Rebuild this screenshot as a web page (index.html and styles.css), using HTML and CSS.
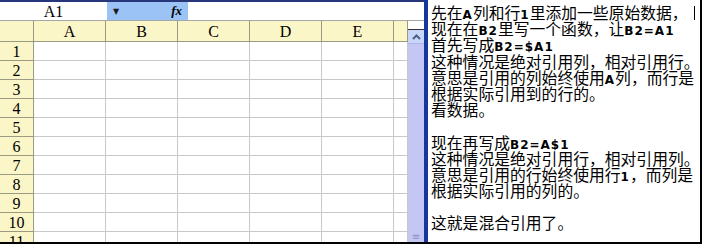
FILE: index.html
```html
<!DOCTYPE html>
<html lang="zh-CN">

<head>
    <meta charset="UTF-8">
    <title>混合引用</title>
    <link rel="stylesheet" href="styles.css">
</head>

<body>
    <div class="app">
        <div class="sheet">
            <div class="formula-bar">
                <div class="name-box">A1</div>
                <div class="fx-box">
                    <span class="drop">&#9660;</span>
                    <span class="fx">fx</span>
                </div>
                <div class="formula-input"></div>
            </div>

            <div class="sheet-body">
                <div class="grid">
                    <div class="corner"></div>
                    <div class="col-head">A</div>
                    <div class="col-head">B</div>
                    <div class="col-head">C</div>
                    <div class="col-head">D</div>
                    <div class="col-head">E</div>
                    <div class="col-head"></div>

                    <div class="row-head">1</div><div class="cell"></div><div class="cell"></div><div class="cell"></div><div class="cell"></div><div class="cell"></div><div class="cell"></div>
                    <div class="row-head">2</div><div class="cell"></div><div class="cell"></div><div class="cell"></div><div class="cell"></div><div class="cell"></div><div class="cell"></div>
                    <div class="row-head">3</div><div class="cell"></div><div class="cell"></div><div class="cell"></div><div class="cell"></div><div class="cell"></div><div class="cell"></div>
                    <div class="row-head">4</div><div class="cell"></div><div class="cell"></div><div class="cell"></div><div class="cell"></div><div class="cell"></div><div class="cell"></div>
                    <div class="row-head">5</div><div class="cell"></div><div class="cell"></div><div class="cell"></div><div class="cell"></div><div class="cell"></div><div class="cell"></div>
                    <div class="row-head">6</div><div class="cell"></div><div class="cell"></div><div class="cell"></div><div class="cell"></div><div class="cell"></div><div class="cell"></div>
                    <div class="row-head">7</div><div class="cell"></div><div class="cell"></div><div class="cell"></div><div class="cell"></div><div class="cell"></div><div class="cell"></div>
                    <div class="row-head">8</div><div class="cell"></div><div class="cell"></div><div class="cell"></div><div class="cell"></div><div class="cell"></div><div class="cell"></div>
                    <div class="row-head">9</div><div class="cell"></div><div class="cell"></div><div class="cell"></div><div class="cell"></div><div class="cell"></div><div class="cell"></div>
                    <div class="row-head">10</div><div class="cell"></div><div class="cell"></div><div class="cell"></div><div class="cell"></div><div class="cell"></div><div class="cell"></div>
                    <div class="row-head">11</div><div class="cell"></div><div class="cell"></div><div class="cell"></div><div class="cell"></div><div class="cell"></div><div class="cell"></div>
                </div>

                <div class="vscroll">
                    <div class="scroll-top"></div>
                    <div class="scroll-btn">
                        <svg width="9" height="6" viewBox="0 0 9 6">
                            <path d="M1 5 L4.5 1.5 L8 5" fill="none" stroke="#4d6185" stroke-width="2" />
                        </svg>
                    </div>
                    <div class="scroll-track"></div>
                    <div class="scroll-grip">&#8801;</div>
                </div>
            </div>
        </div>

        <!-- the note beside the sheet -->
        <div class="note">
            <div class="line">先在<b>A</b>列和行<b>1</b>里添加一些原始数据，<span class="caret"></span></div>
            <div class="line">现在在<b>B2</b>里写一个函数，让<b>B2=A1</b></div>
            <div class="line">首先写成<b>B2=$A1</b></div>
            <div class="line">这种情况是绝对引用列，相对引用行。</div>
            <div class="line">意思是引用的列始终使用<b>A</b>列，而行是</div>
            <div class="line">根据实际引用到的行的。</div>
            <div class="line">看数据。</div>
            <div class="line"></div>
            <div class="line">现在再写成<b>B2=A$1</b></div>
            <div class="line">这种情况是绝对引用行，相对引用列。</div>
            <div class="line">意思是引用的行始终使用行<b>1</b>，而列是</div>
            <div class="line">根据实际引用的列的。</div>
            <div class="line"></div>
            <div class="line">这就是混合引用了。</div>
        </div>
    </div>
</body>

</html>
```

FILE: styles.css
```css
body {
    margin: 0;
    padding: 0;
    background: #fff;
}

.app {
    display: flex;
    width: 702px;
    height: 242px;
    border-bottom: 2px solid #000;
    overflow: hidden;
}

/* left: spreadsheet */
.sheet {
    width: 424px;
    display: flex;
    flex-direction: column;
    font-family: "Liberation Serif", "DejaVu Serif", serif;
    font-size: 16px;
    color: #000;
}

.formula-bar {
    display: flex;
    height: 18px;
    border-top: 2px solid #27367a;
    border-bottom: 1px solid #a6a6a6;
    background: #fff;
}

.name-box {
    width: 107px;
    text-align: center;
    line-height: 20px;
}

.fx-box {
    width: 81px;
    display: flex;
    justify-content: space-between;
    align-items: center;
    padding: 0 6px 0 6px;
    box-sizing: border-box;
    background-color: #9cc3f6;
}

.drop {
    font-size: 8px;
    color: #1a1a1a;
    font-family: "DejaVu Sans", sans-serif;
}

.fx {
    font-style: italic;
    font-weight: bold;
    font-size: 13px;
}

.formula-input {
    flex: 1;
}

.sheet-body {
    flex: 1;
    display: flex;
    overflow: hidden;
}

.grid {
    display: grid;
    grid-template-columns: 34px repeat(5, 72px) 14px;
    grid-template-rows: 21px;
    grid-auto-rows: 19px;
    width: 408px;
}

.grid > div {
    box-sizing: border-box;
    text-align: center;
    line-height: 19px;
}

.corner,
.col-head,
.row-head {
    background-color: #fbf6c7;
    border-right: 1px solid #9c9a82;
    border-bottom: 1px solid #9c9a82;
}

.col-head {
    line-height: 21px !important;
}

.cell {
    border-right: 1px solid #c8c8c8;
    border-bottom: 1px solid #c8c8c8;
}

/* vertical scrollbar */
.vscroll {
    width: 16px;
    display: flex;
    flex-direction: column;
}

.scroll-top {
    height: 8px;
    border-bottom: 1px solid #333;
    background: #fff;
}

.scroll-btn {
    height: 13px;
    display: flex;
    align-items: center;
    justify-content: center;
    background-color: #c8d6fa;
    border-bottom: 1px solid #aab4e8;
}

.scroll-track {
    flex: 1;
    background-color: #c4c6f4;
}

.scroll-grip {
    height: 10px;
    background-color: #c4c6f4;
    color: #8f93c8;
    font-size: 10px;
    line-height: 10px;
    text-align: center;
    font-family: "DejaVu Sans", sans-serif;
}

/* right: note text */
.note {
    flex: 1;
    border-left: 4px solid #17379f;
    border-right: 2px solid #000;
    padding: 5px 0 0 3px;
    font-family: "Noto Sans CJK SC", "Noto Sans", sans-serif;
    font-size: 15.8px;
    color: #000;
    overflow: hidden;
}

.line {
    height: 16.2px;
    line-height: 16.2px;
    white-space: nowrap;
}

.note b {
    font-family: "DejaVu Sans", sans-serif;
    font-size: 12px;
    line-height: 0;
    letter-spacing: 1px;
}

.caret {
    display: inline-block;
    width: 1px;
    height: 14px;
    margin-left: 6px;
    background: #000;
    vertical-align: -1px;
}
```
